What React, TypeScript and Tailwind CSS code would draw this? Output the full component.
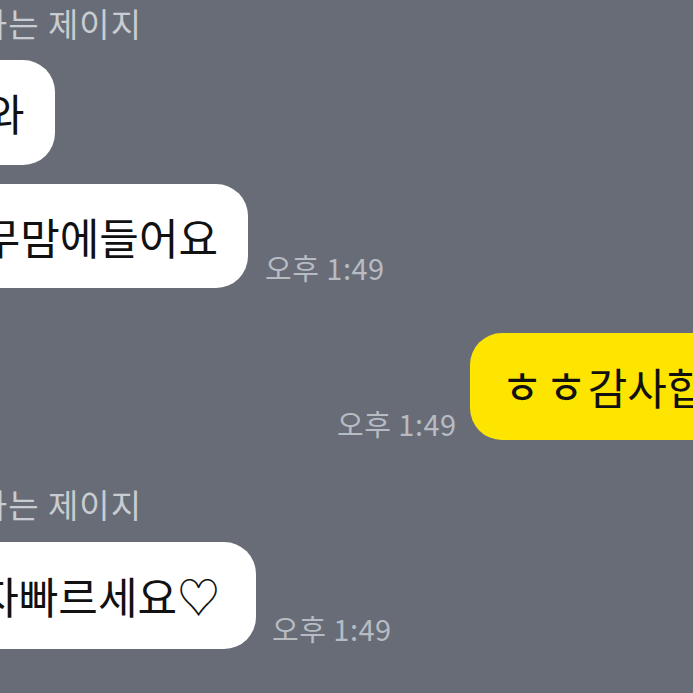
import React from "react";

const font = { fontFamily: '"Noto Sans CJK KR", "Noto Sans", sans-serif' };

function Time() {
  return (
    <span className="shrink-0 whitespace-nowrap text-[29px] leading-[32px] tracking-[0.5px] text-[#b7bbc2]">
      오후 1:49
    </span>
  );
}

export default function App() {
  return (
    <div
      className="w-[693px] h-[693px] overflow-hidden bg-[#676c77] flex flex-col"
      style={font}
    >
      {/* name 1 */}
      <div className="flex justify-end w-[142px] shrink-0 mt-[2px]">
        <span className="shrink-0 whitespace-nowrap text-[33px] leading-[42px] tracking-[1px] text-[#c9ccd1]">
          좋아하는 제이지
        </span>
      </div>

      {/* bubble 1 */}
      <div className="flex justify-end w-[55px] shrink-0 mt-[16px]">
        <div className="shrink-0 whitespace-nowrap bg-white rounded-[32px] h-[105px] pl-[32px] pr-[31px] flex items-center text-[43px] tracking-[-0.5px] text-[#111]">
          우와
        </div>
      </div>

      {/* bubble 2 */}
      <div className="flex items-end gap-[17px] mt-[19px] shrink-0">
        <div className="flex justify-end w-[248px] shrink-0">
          <div className="shrink-0 whitespace-nowrap bg-white rounded-[32px] h-[104px] pl-[32px] pr-[30px] flex items-center text-[43px] tracking-[0px] text-[#111]">
            너무맘에들어요
          </div>
        </div>
        <div className="mb-[3px]">
          <Time />
        </div>
      </div>

      {/* my bubble */}
      <div className="flex items-end gap-[13px] mt-[45px] shrink-0 pl-[337px]">
        <div className="mb-[-1px]">
          <Time />
        </div>
        <div className="shrink-0 whitespace-nowrap bg-[#fee500] rounded-[32px] h-[107px] pl-[31px] pr-[36px] flex items-center text-[43px] tracking-[0px] text-[#111]">
          <span className="inline-block w-[44px] text-[46px] leading-none mb-[6px]">ㅎ</span>
          <span className="inline-block w-[43px] text-[46px] leading-none mb-[6px]">ㅎ</span>
          <span>감사합니다</span>
        </div>
      </div>

      {/* name 2 */}
      <div className="flex justify-end w-[142px] shrink-0 mt-[43px]">
        <span className="shrink-0 whitespace-nowrap text-[33px] leading-[42px] tracking-[1px] text-[#c9ccd1]">
          좋아하는 제이지
        </span>
      </div>

      {/* bubble 4 */}
      <div className="flex items-end gap-[16px] mt-[17px] shrink-0">
        <div className="flex justify-end w-[256px] shrink-0">
          <div className="shrink-0 whitespace-nowrap bg-white rounded-[32px] h-[107px] pl-[32px] pr-[36px] flex items-center text-[43px] tracking-[0px] text-[#111]">
            답장도자빠르세요♡
          </div>
        </div>
        <div className="mb-[3px]">
          <Time />
        </div>
      </div>
    </div>
  );
}
